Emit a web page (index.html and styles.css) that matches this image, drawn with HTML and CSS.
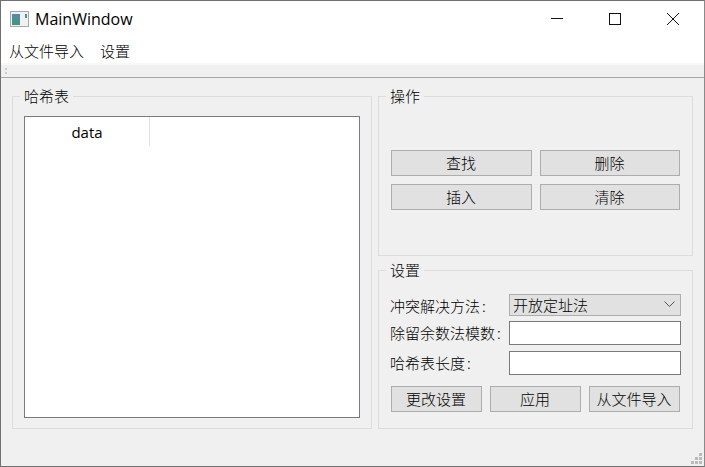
FILE: index.html
```html
<!DOCTYPE html>
<html lang="zh-CN">
<head>
<meta charset="utf-8">
<title>MainWindow</title>
<link rel="stylesheet" href="styles.css">
</head>
<body>
<div class="window">
  <header class="titlebar">
    <svg class="app-icon" width="19" height="17" viewBox="0 0 19 17">
      <defs>
        <linearGradient id="pane" x1="0" y1="0" x2="0" y2="1">
          <stop offset="0" stop-color="#5b86a8"/>
          <stop offset="1" stop-color="#3f9a78"/>
        </linearGradient>
      </defs>
      <rect x="0.5" y="0.5" width="18" height="15" fill="#eef2f2" stroke="#a8a8a8"/>
      <rect x="2" y="3" width="8" height="11" fill="url(#pane)"/>
      <rect x="15" y="3" width="2" height="4" fill="#4f8f9f"/>
    </svg>
    <span class="title">MainWindow</span>
    <div class="controls">
      <span class="ctl"><svg width="14" height="14" viewBox="0 0 14 14"><path d="M1 6.5H13" stroke="#111" fill="none"/></svg></span>
      <span class="ctl"><svg width="14" height="14" viewBox="0 0 14 14"><rect x="1.5" y="1.5" width="11" height="11" stroke="#111" fill="none"/></svg></span>
      <span class="ctl"><svg width="14" height="14" viewBox="0 0 14 14"><path d="M1 1L13 13M13 1L1 13" stroke="#111" fill="none"/></svg></span>
    </div>
  </header>
  <nav class="menubar"><span>从文件导入</span><span>设置</span></nav>
  <div class="toolbar"><span class="grip"></span></div>
  <main class="central">
    <fieldset class="group group-table">
      <legend>哈希表</legend>
      <div class="table"><div class="th">data</div></div>
    </fieldset>
    <div class="right">
      <fieldset class="group group-ops">
        <legend>操作</legend>
        <div class="ops">
          <button>查找</button><button>删除</button>
          <button>插入</button><button>清除</button>
        </div>
      </fieldset>
      <fieldset class="group group-settings">
        <legend>设置</legend>
        <div class="form">
          <label>冲突解决方法<span class="colon">:</span></label>
          <div class="combo"><span>开放定址法</span><svg width="11" height="7" viewBox="0 0 11 7"><path d="M0.5 0.5L5.5 5.5L10.5 0.5" stroke="#555" fill="none"/></svg></div>
          <label>除留余数法模数<span class="colon">:</span></label>
          <input type="text">
          <label>哈希表长度<span class="colon">:</span></label>
          <input type="text">
        </div>
        <div class="actions">
          <button>更改设置</button><button>应用</button><button>从文件导入</button>
        </div>
      </fieldset>
    </div>
    <svg class="size-grip" width="12" height="12" viewBox="0 0 12 12" fill="#bbb">
      <rect x="8" y="0" width="3" height="3"/><rect x="4" y="4" width="3" height="3"/><rect x="8" y="4" width="3" height="3"/>
      <rect x="0" y="8" width="3" height="3"/><rect x="4" y="8" width="3" height="3"/><rect x="8" y="8" width="3" height="3"/>
    </svg>
  </main>
</div>
</body>
</html>
```
FILE: styles.css
```css
* { box-sizing: border-box; }
html, body { margin: 0; padding: 0; }
body {
  width: 705px; height: 467px; overflow: hidden;
  font-family: "Noto Sans CJK SC", "Noto Sans", sans-serif;
  font-size: 15px; font-weight: 300; color: #000; background: #fff;
}
.window {
  width: 705px; height: 467px;
  display: flex; flex-direction: column;
  border: 1px solid #707070; border-right-color: #8a8a8a;
  background: #fff;
}
.titlebar { height: 37px; display: flex; align-items: center; padding: 0 0 1px 9px; flex: none; }
.app-icon { margin-right: 6px; }
.title { font-family: "Open Sans", "Noto Sans", sans-serif; font-weight: 400; font-size: 16px; }
.controls { margin-left: auto; display: flex; padding-right: 2px; }
.ctl { width: 58px; height: 37px; display: flex; align-items: center; justify-content: center; }
.menubar { height: 25px; display: flex; gap: 16px; padding-left: 8px; align-items: center; flex: none; }
.toolbar {
  height: 15px; flex: none; background: #f0f0f0;
  border-top: 2px solid #f8f8f8; border-bottom: 1px solid #a8a8a8;
  display: flex; align-items: center; padding-left: 4px;
}
.grip { width: 2px; height: 6px; border-top: 2px solid #ccc; border-bottom: 2px solid #ccc; }
.central {
  flex: 1; background: #f0f0f0; position: relative;
  display: flex; gap: 6px; padding: 10px 0 0 11px; align-items: flex-start;
}
.group {
  margin: 0; padding: 0; min-width: 0;
  border: 1px solid #dcdcdc;
}
.group legend { padding: 0 4px; line-height: 16px; height: 16px; margin-left: -5px; }
.group-table { width: 360px; height: 341px; padding: 12px 11px 10px 11px; }
.group-table legend { margin-left: -4px; }
.table { width: 336px; height: 302px; background: #fff; border: 1px solid #7a7a80; }
.th {
  width: 125px; height: 29px; border-right: 1px solid #e2e2e2;
  text-align: center; line-height: 30px;
  font-family: "Open Sans", "Noto Sans", sans-serif; font-weight: 400; font-size: 15px;
}
.right { width: 315px; flex: none; display: flex; flex-direction: column; gap: 6px; }
.group-ops { height: 168px; padding: 46px 12px 0 12px; }
.ops { display: grid; grid-template-columns: 141px 140px; grid-template-rows: 26px 26px; column-gap: 8px; row-gap: 8px; }
button {
  font: inherit; color: inherit; margin: 0; padding: 0 1px 2px 0;
  background: #e1e1e1; border: 1px solid #adadad; border-radius: 0;
}
.group-settings { height: 167px; padding: 16px 12px 0 12px; }
.form { display: grid; grid-template-columns: 118px 172px; grid-template-rows: 27px 30px 24px; align-items: start; }
.form label { white-space: nowrap; line-height: 24px; margin-left: -1px; }
.colon { margin-left: 2px; }
.combo {
  height: 22px; background: #e1e1e1; border: 1px solid #adadad;
  display: flex; align-items: center; justify-content: space-between;
  padding: 0 5px 2px 3px;
}
input { display: block; height: 24px; width: 172px; margin: 0; padding: 0; background: #fff; border: 1px solid #7a7a7a; border-radius: 0; outline: none; }
.actions { display: grid; grid-template-columns: 91px 91px 91px; column-gap: 8px; margin-top: 11px; }
.actions button { height: 26px; }
.size-grip { position: absolute; right: 1px; bottom: 1px; }
```
